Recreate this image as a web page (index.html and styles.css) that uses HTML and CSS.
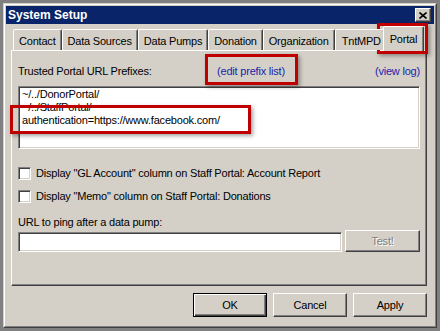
FILE: index.html
```html
<!DOCTYPE html>
<html lang="en">
<head>
  <meta charset="UTF-8">
  <title>System Setup</title>
  <link rel="stylesheet" href="styles.css">
</head>
<body>
  <div class="window">
    <div class="window-inner">
      <!-- Title Bar -->
      <div class="titlebar">
        <span class="title">System Setup</span>
        <span class="close-btn">
          <svg width="8" height="7" viewBox="0 0 8 7">
            <path d="M0.5 0.5 L7.5 6.5 M7.5 0.5 L0.5 6.5" stroke="#000" stroke-width="1.6" fill="none"/>
          </svg>
        </span>
      </div>

      <div class="dialog-body">
        <!-- Tabs -->
        <div class="tabs">
          <div class="tab">Contact</div>
          <div class="tab">Data Sources</div>
          <div class="tab">Data Pumps</div>
          <div class="tab">Donation</div>
          <div class="tab">Organization</div>
          <div class="tab tab-clipped">TntMPD</div>
          <div class="tab tab-active">Portal</div>
        </div>

        <!-- Portal Page -->
        <div class="panel">
          <div class="label-row">
            <span>Trusted Portal URL Prefixes:</span>
            <span class="link">(edit prefix list)</span>
            <span class="link link-right">(view log)</span>
          </div>
          <div class="url-list">
            <div>~/../DonorPortal/</div>
            <div>~/../StaffPortal/</div>
            <div>authentication=https://www.facebook.com/</div>
          </div>

          <div class="check-row check-first">
            <span class="checkbox"></span>
            <span>Display "GL Account" column on Staff Portal: Account Report</span>
          </div>
          <div class="check-row">
            <span class="checkbox"></span>
            <span>Display "Memo" column on Staff Portal: Donations</span>
          </div>

          <div class="ping-label">URL to ping after a data pump:</div>
          <div class="ping-row">
            <div class="text-input"></div>
            <div class="btn btn-test">Test!</div>
          </div>
        </div>

        <!-- Dialog Buttons -->
        <div class="button-row">
          <div class="btn btn-default">OK</div>
          <div class="btn">Cancel</div>
          <div class="btn">Apply</div>
        </div>
      </div>
    </div>
  </div>

  <!-- Annotation boxes -->
  <div class="mark mark-tab"></div>
  <div class="mark mark-edit"></div>
  <div class="mark mark-auth"></div>
</body>
</html>
```

FILE: styles.css
```css
/* Global Styles */
* {
  margin: 0;
  padding: 0;
  box-sizing: border-box;
}

body {
  width: 440px;
  height: 331px;
  overflow: hidden;
  background-color: #808080;
  font-family: 'Liberation Sans', Arial, sans-serif;
  font-size: 11px;
  letter-spacing: -0.2px;
  color: #000;
}

/* Window Frame */
.window {
  margin: 3px 0 0 3px;
  width: 434px;
  height: 325px;
  border: 1px solid;
  border-color: #d4d0c8 #404040 #404040 #d4d0c8;
  background-color: #d4d0c8;
}

.window-inner {
  height: 100%;
  border: 1px solid;
  border-color: #ffffff #808080 #808080 #ffffff;
  padding: 1px;
}

/* Title Bar */
.titlebar {
  height: 18px;
  display: flex;
  align-items: center;
  justify-content: space-between;
  padding: 0 3px 0 2px;
  background-color: #0a246a;
}

.title {
  font-size: 12px;
  font-weight: bold;
  letter-spacing: 0;
  color: #ffffff;
}

.close-btn {
  width: 16px;
  height: 14px;
  display: flex;
  align-items: center;
  justify-content: center;
  background-color: #d4d0c8;
  border: 1px solid;
  border-color: #ffffff #404040 #404040 #ffffff;
  box-shadow: inset -1px -1px #808080;
}

.close-btn svg {
  display: block;
}

.dialog-body {
  padding: 2px 7px 0 5px;
}

/* Tabs */
.tabs {
  display: flex;
  align-items: flex-end;
  height: 25px;
  margin-bottom: -1px;
  padding-left: 2px;
  position: relative;
  z-index: 1;
}

.tab {
  height: 21px;
  margin-bottom: 1px;
  padding: 5px 5px 0 5px;
  line-height: 13px;
  white-space: nowrap;
  overflow: hidden;
  background-color: #d4d0c8;
  border: 1px solid;
  border-bottom: none;
  border-color: #ffffff #404040 transparent #ffffff;
  border-radius: 2px 2px 0 0;
  box-shadow: inset -1px 0 #808080;
}

.tab-clipped {
  width: 50px;
  flex-shrink: 0;
  padding-left: 6px;
}

.tab-active {
  height: 25px;
  margin: 0 -2px 0 -2px;
  padding: 6px 6px 0 6px;
  position: relative;
  z-index: 2;
}

/* Panel */
.panel {
  height: 236px;
  padding: 14px 6px 0 6px;
  border: 1px solid;
  border-color: #ffffff #404040 #404040 #ffffff;
  box-shadow: inset -1px -1px #808080;
}

.label-row {
  display: grid;
  grid-template-columns: 199px auto 1fr;
  line-height: 13px;
}

.link {
  color: #1c1ca8;
}

.link-right {
  justify-self: end;
}

.url-list {
  height: 63px;
  margin-top: 8px;
  padding: 1px 2px 0 3px;
  line-height: 13px;
  background-color: #ffffff;
  border: 1px solid;
  border-color: #808080 #ffffff #ffffff #808080;
  box-shadow: inset 1px 1px #404040, inset -1px -1px #d4d0c8;
}

.check-row {
  display: flex;
  align-items: center;
  gap: 5px;
  height: 13px;
  margin-top: 10px;
  line-height: 13px;
}

.check-first {
  margin-top: 18px;
}

.checkbox {
  width: 13px;
  height: 13px;
  flex-shrink: 0;
  background-color: #ffffff;
  border: 1px solid;
  border-color: #808080 #ffffff #ffffff #808080;
  box-shadow: inset 1px 1px #404040, inset -1px -1px #d4d0c8;
}

.ping-label {
  margin-top: 13px;
  line-height: 13px;
}

.ping-row {
  display: flex;
  align-items: flex-end;
  gap: 3px;
  margin-top: 1px;
}

.text-input {
  flex: 1;
  height: 20px;
  background-color: #ffffff;
  border: 1px solid;
  border-color: #808080 #ffffff #ffffff #808080;
  box-shadow: inset 1px 1px #404040, inset -1px -1px #d4d0c8;
}

/* Button Styles */
.btn {
  width: 74px;
  height: 24px;
  display: flex;
  align-items: center;
  justify-content: center;
  background-color: #d4d0c8;
  border: 1px solid;
  border-color: #ffffff #404040 #404040 #ffffff;
  box-shadow: inset -1px -1px #808080;
}

.btn-test {
  width: 75px;
  height: 22px;
  color: #808080;
  text-shadow: 1px 1px #ffffff;
}

.btn-default {
  border-color: #000000;
  box-shadow: inset 1px 1px #ffffff, inset -1px -1px #404040, inset -2px -2px #808080;
}

.button-row {
  display: flex;
  justify-content: flex-end;
  gap: 6px;
  margin-top: 7px;
}

/* Annotation Boxes */
.mark {
  position: absolute;
  border: 3px solid #c00000;
  box-shadow: 2px 2px 4px rgba(0, 0, 0, 0.35);
}

.mark-tab {
  left: 377px;
  top: 23px;
  width: 51px;
  height: 31px;
}

.mark-edit {
  left: 205px;
  top: 54px;
  width: 93px;
  height: 31px;
}

.mark-auth {
  left: 10px;
  top: 105px;
  width: 241px;
  height: 29px;
}
```
